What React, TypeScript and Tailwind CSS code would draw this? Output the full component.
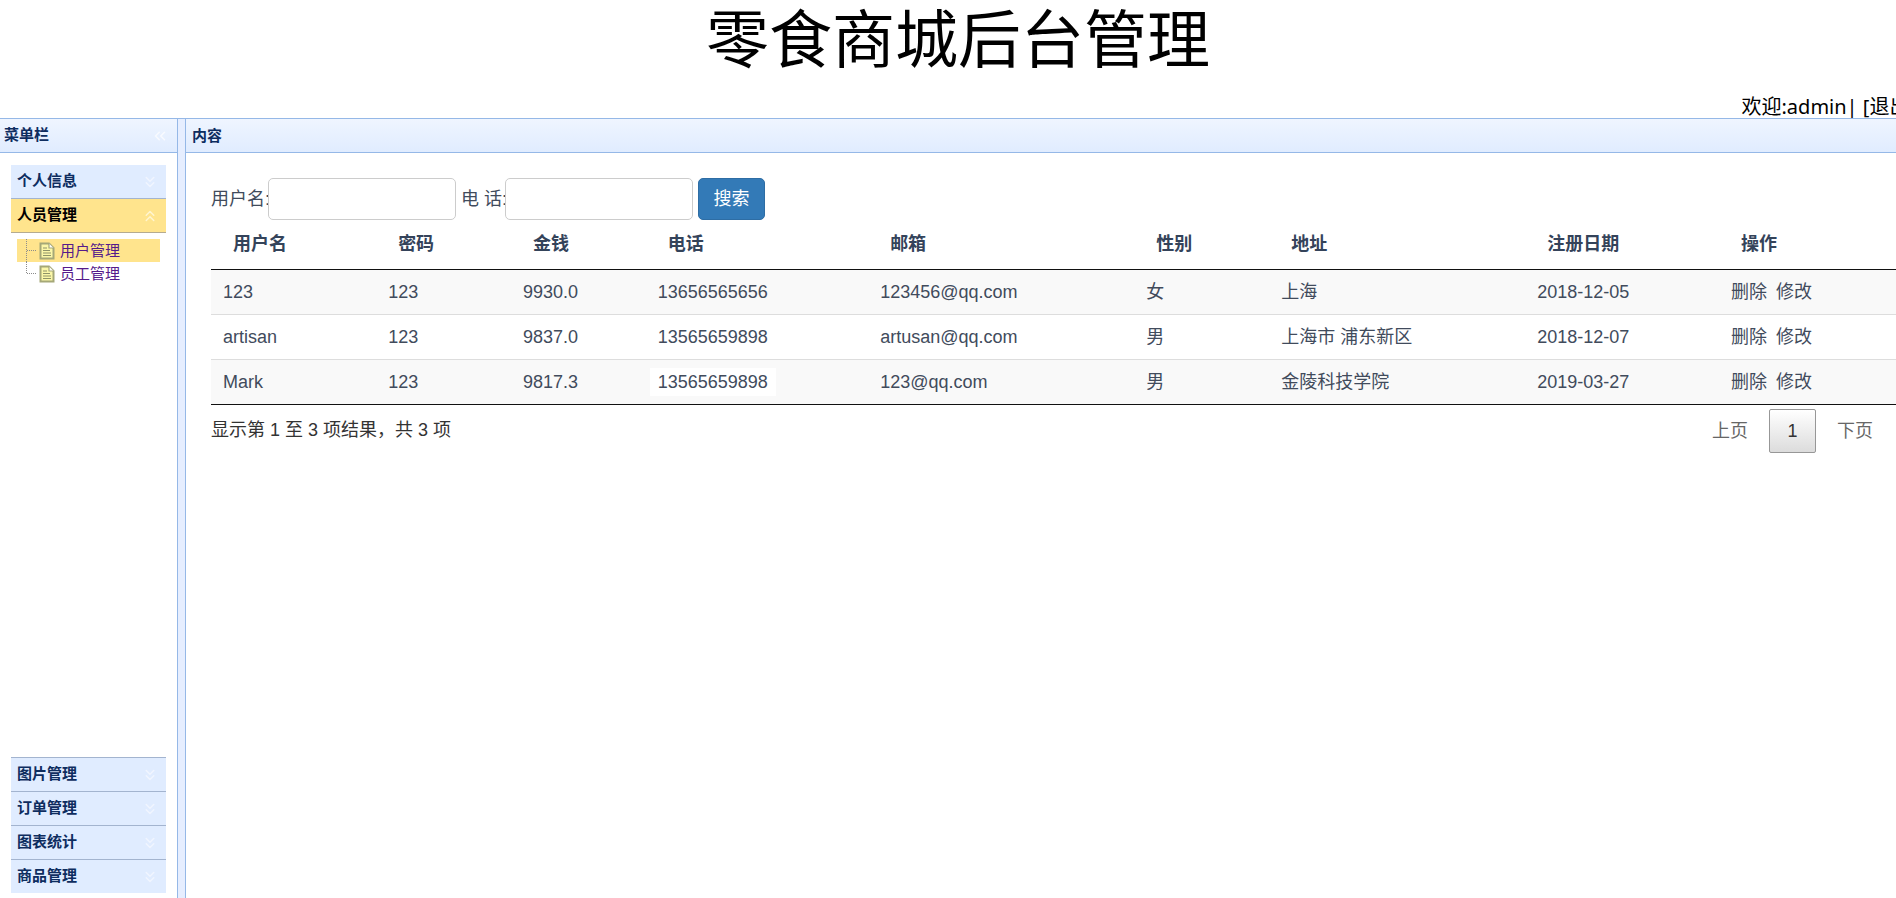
import { ChevronsDown, ChevronsLeft, ChevronsUp } from "lucide-react";

const users = [
  { name: "123", password: "123", money: "9930.0", phone: "13656565656", email: "123456@qq.com", sex: "女", address: "上海", date: "2018-12-05" },
  { name: "artisan", password: "123", money: "9837.0", phone: "13565659898", email: "artusan@qq.com", sex: "男", address: "上海市 浦东新区", date: "2018-12-07" },
  { name: "Mark", password: "123", money: "9817.3", phone: "13565659898", email: "123@qq.com", sex: "男", address: "金陵科技学院", date: "2019-03-27", marked: true },
];

const columns = [
  { title: "用户名", width: "w-[9.8%]" },
  { title: "密码", width: "w-[8%]" },
  { title: "金钱", width: "w-[8%]" },
  { title: "电话", width: "w-[13.2%]" },
  { title: "邮箱", width: "w-[15.8%]" },
  { title: "性别", width: "w-[8%]" },
  { title: "地址", width: "w-[15.2%]" },
  { title: "注册日期", width: "w-[11.5%]" },
  { title: "操作", width: "w-[10.5%]" },
];

function PageIcon() {
  return (
    <svg width="16" height="18" viewBox="0 0 16 18" className="shrink-0">
      <path d="M1.5 1.5h8.5l4.5 4.5v10.5h-13z" fill="#fbf7a8" stroke="#a5a878" strokeWidth="2" />
      <path d="M10 1.5v4.5h4.5" fill="#fff" stroke="#a5a878" strokeWidth="1.2" />
      <path d="M4 6h4M4 8.5h7M4 11h8M4 13.5h8" stroke="#8f9468" strokeWidth="1.2" />
    </svg>
  );
}

function TreeLines({ last = false }: { last?: boolean }) {
  return (
    <svg width="22" height="23" viewBox="0 0 22 23" className="shrink-0" fill="none" stroke="#8c8c8c" strokeDasharray="1 1">
      <path d={last ? "M9.5 0v11" : "M9.5 0v23"} />
      <path d="M10 11.5h10" />
    </svg>
  );
}

function MenuHeader({ title }: { title: string }) {
  return (
    <button className="flex h-[33px] w-full shrink-0 items-center justify-between bg-[#e0ecff] pl-[6px] pr-[7px] text-[15px] font-bold text-[#0e2d5f]">
      {title}
      <ChevronsDown size={18} className="text-[#f0f5ff]" />
    </button>
  );
}

function Sidebar() {
  return (
    <aside className="flex w-[178px] shrink-0 flex-col border-r border-[#95b8e7]">
      <div className="flex h-[35px] shrink-0 items-center justify-between border-y border-[#95b8e7] bg-linear-to-b from-[#eff5ff] to-[#e0ecff] pl-1 pr-2 text-[15px] font-bold text-[#0e2d5f]">
        菜单栏
        <ChevronsLeft size={18} className="text-[#f8faff]" />
      </div>
      <nav className="flex grow flex-col px-[11px] pb-[5px] pt-3">
        <div className="border-b border-[#a3b4cf]">
          <MenuHeader title="个人信息" />
        </div>
        <button className="flex h-[34px] w-full shrink-0 items-center justify-between border-b border-[#b5ab90] bg-[#ffe48d] pl-[6px] pr-[7px] text-[15px] font-bold text-black">
          人员管理
          <ChevronsUp size={18} className="text-[#fff5d0]" />
        </button>
        <ul className="grow px-[6px] pt-[6px] text-[15px] leading-[23px] text-[#551a8b]">
          <li className="flex items-center bg-[#ffe48d]">
            <TreeLines />
            <PageIcon />
            <a href="#users" className="pl-[5px]">用户管理</a>
          </li>
          <li className="flex items-center">
            <TreeLines last />
            <PageIcon />
            <a href="#staff" className="pl-[5px]">员工管理</a>
          </li>
        </ul>
        {["图片管理", "订单管理", "图表统计", "商品管理"].map((title) => (
          <div key={title} className="border-t border-[#a3b4cf]">
            <MenuHeader title={title} />
          </div>
        ))}
      </nav>
    </aside>
  );
}

function UserTable() {
  return (
    <table className="w-full table-fixed border-collapse border-b border-[#111] text-left">
      <thead>
        <tr className="h-[49px] border-b border-[#111]">
          {columns.map((column) => (
            <th key={column.title} className={`${column.width} px-[22px] font-bold text-[#34435a]`}>
              {column.title}
            </th>
          ))}
        </tr>
      </thead>
      <tbody>
        {users.map((user) => (
          <tr key={user.name} className="h-[45px] border-t border-[#dddddd] odd:bg-[#f9f9f9] first:border-[#111]">
            <td className="px-3">{user.name}</td>
            <td className="px-3">{user.password}</td>
            <td className="px-3">{user.money}</td>
            <td className="px-3">
              {user.marked ? <span className="-mx-2 bg-white px-2 py-1">{user.phone}</span> : user.phone}
            </td>
            <td className="px-3">{user.email}</td>
            <td className="px-3">{user.sex}</td>
            <td className="px-3">{user.address}</td>
            <td className="px-3">{user.date}</td>
            <td className="px-3">
              <a href="#delete" className="mr-[9px]">删除</a>
              <a href="#edit">修改</a>
            </td>
          </tr>
        ))}
      </tbody>
    </table>
  );
}

export default function App() {
  return (
    <div className="flex min-h-screen flex-col overflow-hidden bg-white font-['Liberation_Sans','Noto_Sans_CJK_SC',sans-serif]">
      {/* the header runs slightly past the right edge of the window */}
      <header className="w-[calc(100%+20px)] font-['Noto_Sans','Noto_Sans_CJK_SC',sans-serif] text-black">
        <h1 className="mb-5 text-center text-[63px] leading-[76px]">零食商城后台管理</h1>
        <p className="text-right text-[20px] leading-[22px]">
          欢迎:admin| [<a href="#logout">退出</a>]
        </p>
      </header>

      <div className="flex grow">
        <Sidebar />
        <div className="w-2 shrink-0 border-r border-t border-[#95b8e7] bg-[#e6eeff]"></div>
        <main className="min-w-0 grow text-lg text-[#414b5c]">
          <div className="flex h-[35px] items-center border-y border-[#95b8e7] bg-linear-to-b from-[#eff5ff] to-[#e0ecff] pl-[6px] text-[15px] font-bold text-[#0e2d5f]">
            内容
          </div>
          <div className="pl-[25px] pt-[25px]">
            <form className="flex items-center">
              <label htmlFor="username" className="w-[57px] whitespace-nowrap">用户名:</label>
              <input id="username" type="text" className="mr-[5px] h-[42px] w-[188px] rounded-[5px] border border-[#cccccc] bg-white px-3" />
              <label htmlFor="phone" className="w-11 whitespace-nowrap">电 话:</label>
              <input id="phone" type="text" className="mr-[5px] h-[42px] w-[188px] rounded-[5px] border border-[#cccccc] bg-white px-3" />
              <button type="button" className="h-[42px] w-[67px] rounded-[5px] border border-[#2e6da4] bg-[#337ab7] text-white">
                搜索
              </button>
            </form>
            <UserTable />
            <div className="flex items-start justify-between pr-1 pt-1 text-[#333333]">
              <p className="pt-[7px]">显示第 1 至 3 项结果，共 3 项</p>
              <div className="flex gap-[2px]">
                <button className="h-11 px-[19px] text-[#666666]">上页</button>
                <button className="h-11 w-[47px] rounded-[2px] border border-[#979797] bg-linear-to-b from-white to-[#dcdcdc]">1</button>
                <button className="h-11 px-[19px] text-[#666666]">下页</button>
              </div>
            </div>
          </div>
        </main>
      </div>
    </div>
  );
}
